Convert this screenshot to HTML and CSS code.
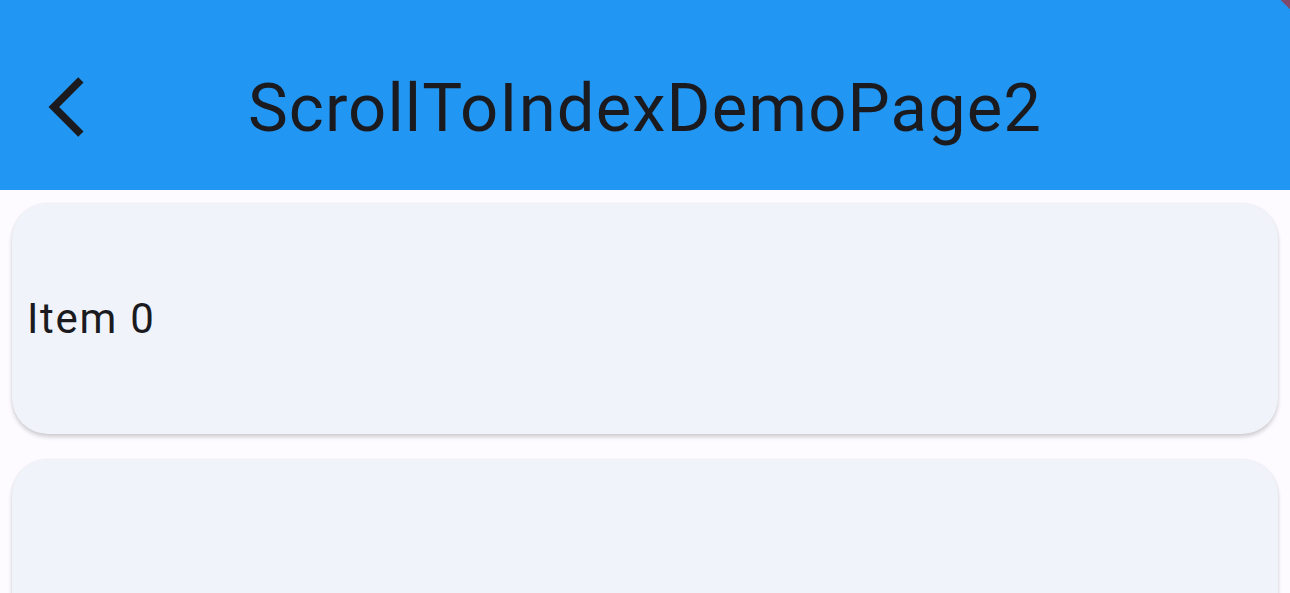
FILE: index.html
```html
<!DOCTYPE html>
<html>
  <head>
    <meta charset="UTF-8">
    <title>ScrollToIndexDemoPage2</title>
    <link rel="stylesheet" href="styles.css">
  </head>
  <body>
    <header class="app-bar">
      <button class="back-btn" aria-label="Back">
        <svg viewBox="0 0 24 24" width="72" height="72">
          <path d="M17.51 3.87L15.73 2.1 5.84 12l9.9 9.9 1.77-1.77L9.38 12l8.13-8.13z" fill="#1b1b1f"/>
        </svg>
      </button>
      <h1 class="title">ScrollToIndexDemoPage2</h1>
      <div class="debug-corner"></div>
    </header>
    <main class="list">
      <div class="card"><span>Item 0</span></div>
      <div class="card"></div>
    </main>
  </body>
</html>
```

FILE: styles.css
```css
      html, body {
        height: 100%;
        overflow: hidden;
      }

      body {
        margin: 0;
        font-family: Roboto, "Noto Sans", sans-serif;
        background-color: #fdfbff;
        color: #1b1b1f;
      }

      .app-bar {
        position: relative;
        height: 190px;
        background-color: #2196f3;
        display: flex;
        align-items: center;
        justify-content: center;
        overflow: hidden;
      }

      .back-btn {
        position: absolute;
        left: 31px;
        top: 71px;
        width: 72px;
        height: 72px;
        padding: 0;
        border: none;
        background: none;
        cursor: pointer;
      }

      .back-btn svg {
        display: block;
      }

      .title {
        margin: 0;
        margin-top: 26px;
        font-size: 67px;
        font-weight: 400;
        letter-spacing: 1.1px;
      }

      .debug-corner {
        position: absolute;
        top: -10px;
        right: -40px;
        width: 80px;
        height: 16px;
        background-color: rgba(183, 28, 28, 0.63);
        transform: rotate(45deg);
      }

      .list {
        padding: 13px 12px 0;
        display: flex;
        flex-direction: column;
        gap: 25px;
      }

      .card {
        height: 231px;
        border-radius: 36px;
        background-color: #f0f3fa;
        box-shadow: 0 3px 4px rgba(0, 0, 0, 0.18), 0 0 2px rgba(0, 0, 0, 0.06);
        display: flex;
        align-items: center;
        padding: 0 15px;
        font-size: 42px;
        letter-spacing: 1.7px;
      }
```
